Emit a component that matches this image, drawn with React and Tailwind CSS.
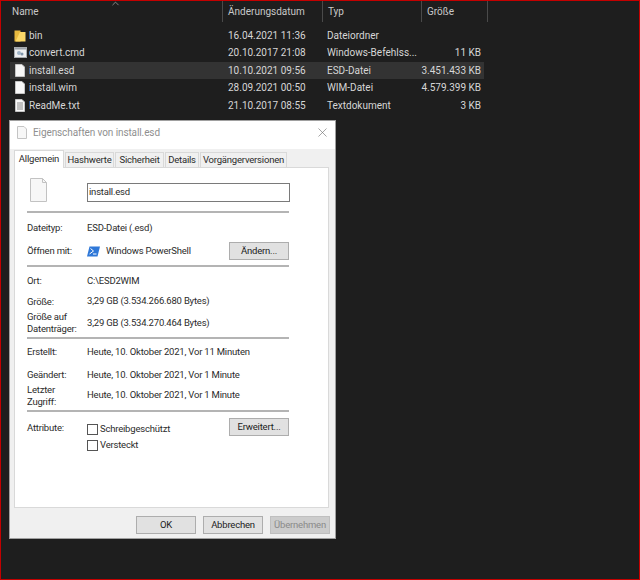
import React from 'react';
import { ChevronUp, X } from 'lucide-react';

const files = [
  { name: 'bin', date: '16.04.2021 11:36', type: 'Dateiordner', size: '', icon: 'folder' },
  { name: 'convert.cmd', date: '20.10.2017 21:08', type: 'Windows-Befehlss...', size: '11 KB', icon: 'cmd' },
  { name: 'install.esd', date: '10.10.2021 09:56', type: 'ESD-Datei', size: '3.451.433 KB', icon: 'file', selected: true },
  { name: 'install.wim', date: '28.09.2021 00:50', type: 'WIM-Datei', size: '4.579.399 KB', icon: 'file' },
  { name: 'ReadMe.txt', date: '21.10.2017 08:55', type: 'Textdokument', size: '3 KB', icon: 'txt' },
];

function FileIcon({ type }) {
  if (type === 'folder') {
    return (
      <svg width="12" height="13" viewBox="0 0 12 13">
        <path d="M0.5 1.5h6v11h-6z" fill="#e8b93f" />
        <path d="M6 3h5.500v9.500H1.500z" fill="#fbd868" />
      </svg>
    );
  }
  if (type === 'cmd') {
    return (
      <svg width="13" height="11" viewBox="0 0 13 11">
        <rect x="0.5" y="0.5" width="12" height="10" fill="#eef0f2" stroke="#a8acb0" />
        <rect x="1" y="1" width="11" height="1.5" fill="#9aa0a8" />
        <circle cx="5" cy="6" r="2" fill="#9fb4c8" />
        <circle cx="8" cy="7" r="1.5" fill="#7f95aa" />
      </svg>
    );
  }
  return (
    <svg width="10" height="13" viewBox="0 0 10 13">
      <path d="M0.5 0.5h6.500l2.500 2.500v9.500h-9z" fill="#f7f7f7" stroke="#c4c4c4" />
      {type === 'txt' && <path d="M2 4h6M2 6h6M2 8h6M2 10h6" stroke="#8a8a8a" />}
    </svg>
  );
}

function Separator() {
  return <div className="h-[2px] w-[262px] bg-[#b4b4b4]" />;
}

function WinButton({ children, disabled }) {
  return (
    <div
      className={`flex h-[18px] w-[60px] items-center justify-center border ${
        disabled ? 'border-[#bfbfbf] bg-[#cccccc] text-[#8a8a8a]' : 'border-[#adadad] bg-[#e1e1e1] text-[#222222]'
      }`}
    >
      {children}
    </div>
  );
}

function PropRow({ label, value, className = 'h-[18px]' }) {
  return (
    <div className={`flex items-center ${className}`}>
      <div className="w-[60px] leading-[12px]">{label}</div>
      <div>{value}</div>
    </div>
  );
}

function Checkbox({ label }) {
  return (
    <div className="mt-[4px] flex items-center gap-[2px]">
      <div className="h-[11px] w-[11px] border border-[#555555] bg-white" />
      <span>{label}</span>
    </div>
  );
}

const tabs = [
  { label: 'Hashwerte', width: 'w-[49px]' },
  { label: 'Sicherheit', width: 'w-[49px]' },
  { label: 'Details', width: 'w-[34px]' },
  { label: 'Vorgängerversionen', width: 'w-[87px]' },
];

export default function App() {
  return (
    <div className="h-[580px] w-[640px] overflow-hidden border border-[#c40000] bg-[#1e1e1e] font-['Roboto',sans-serif] text-[10px]">
      {/* explorer header */}
      <div className="relative flex h-[21px] items-center text-[#c8c8c8]">
        <ChevronUp size={11} strokeWidth={1.5} className="absolute left-[109px] top-[-3px] text-[#b0b0b0]" />
        <div className="h-full w-[221px] pl-[11px] pt-[3px]">Name</div>
        <div className="h-full w-[100px] border-l border-[#4a4a4a] pl-[5px] pt-[3px]">Änderungsdatum</div>
        <div className="h-full w-[99px] border-l border-[#4a4a4a] pl-[5px] pt-[3px]">Typ</div>
        <div className="h-full w-[67px] border-x border-[#4a4a4a] pl-[5px] pt-[3px]">Größe</div>
      </div>

      {/* file rows */}
      <div className="ml-[9px] mt-[4.5px] w-[474px] text-[#d6d6d6]">
        {files.map((f) => (
          <div key={f.name} className={`flex h-[17.5px] items-center ${f.selected ? 'bg-[#333333]' : ''}`}>
            <div className="flex w-[19px] justify-center pl-[1px]">
              <FileIcon type={f.icon} />
            </div>
            <div className="w-[199px]">{f.name}</div>
            <div className="w-[99px]">{f.date}</div>
            <div className="w-[90px]">{f.type}</div>
            <div className="w-[64px] text-right">{f.size}</div>
          </div>
        ))}
      </div>

      {/* properties dialog */}
      <div className="ml-[8px] mt-[6px] flex h-[419px] w-[327px] flex-col border border-[#a0a0a0] bg-[#f0f0f0] text-[9.5px] tracking-[-0.2px] text-[#2b2b2b]">
        <div className="flex h-[28px] items-center bg-white pb-[5px] pl-[7px] pr-[5px] text-[#8f8f8f]">
          <FileIcon type="file" />
          <span className="ml-[6px] flex-1 text-[10px] tracking-[-0.1px]">Eigenschaften von install.esd</span>
          <X size={15} strokeWidth={1} className="text-[#6f6f6f]" />
        </div>

        <div className="ml-[4px] mr-[6px] flex h-[18px] items-end">
          <div className="z-10 -mb-px flex h-[18px] w-[50px] items-center justify-center border border-b-0 border-[#d9d9d9] bg-white">
            Allgemein
          </div>
          {tabs.map((t) => (
            <div
              key={t.label}
              className={`ml-[1px] flex h-[15px] items-center justify-center border border-b-0 border-[#d9d9d9] bg-[#f0f0f0] ${t.width}`}
            >
              {t.label}
            </div>
          ))}
        </div>

        <div className="ml-[4px] mr-[6px] h-[341px] border border-[#d9d9d9] bg-white pl-[12px]">
          <div className="mt-[10px] flex h-[24px] items-end">
            <div className="ml-[3px] w-[57px]">
              <svg width="17" height="24" viewBox="0 0 17 24">
                <path d="M0.5 0.5h12l4 4v19h-16z" fill="#f7f7f7" stroke="#c2c2c2" />
                <path d="M12.500 0.5v4h4" fill="none" stroke="#c2c2c2" />
              </svg>
            </div>
            <div className="flex h-[19px] w-[203px] items-center border border-[#7a7a7a] pl-[1px]">install.esd</div>
          </div>
          <div className="mt-[9px]"><Separator /></div>
          <PropRow label="Dateityp:" value="ESD-Datei (.esd)" className="mt-[5px] h-[18px] pt-[2px]" />
          <div className="mt-[6px] flex h-[18px] items-center">
            <div className="w-[60px]">Öffnen mit:</div>
            <svg width="13" height="11" viewBox="0 0 13 11" className="mr-[6px]">
              <path d="M2.500 0.5h10.500l-2.500 10h-10.500z" fill="#2f78d8" />
              <path d="M3.500 2.500l3 2.500-4 3M6 8h3.500" fill="none" stroke="#ffffff" strokeWidth="1" />
            </svg>
            <div className="w-[123px]">Windows PowerShell</div>
            <WinButton>Ändern...</WinButton>
          </div>
          <div className="mt-[5px]"><Separator /></div>
          <PropRow label="Ort:" value="C:\ESD2WIM" className="mt-[4px] h-[18px] pt-[2px]" />
          <PropRow label="Größe:" value="3,29 GB (3.534.266.680 Bytes)" className="mt-[3px] h-[18px] pt-[1px]" />
          <PropRow label={<>Größe auf<br />Datenträger:</>} value="3,29 GB (3.534.270.464 Bytes)" className="h-[24px] pt-[2px]" />
          <div className="mt-[3px]"><Separator /></div>
          <PropRow label="Erstellt:" value="Heute, 10. Oktober 2021, Vor 11 Minuten" className="mt-[3px] h-[18px] pt-[2px]" />
          <PropRow label="Geändert:" value="Heute, 10. Oktober 2021, Vor 1 Minute" className="mt-[5px] h-[18px] pt-[2px]" />
          <PropRow label={<>Letzter<br />Zugriff:</>} value="Heute, 10. Oktober 2021, Vor 1 Minute" className="h-[24px] pt-[1px]" />
          <div className="mt-[3px]"><Separator /></div>
          <div className="mt-[6px] flex h-[18px] items-center">
            <div className="w-[60px] pt-[2px]">Attribute:</div>
            <div className="w-[142px]"><Checkbox label="Schreibgeschützt" /></div>
            <WinButton>Erweitert...</WinButton>
          </div>
          <div className="-mt-[2px] flex h-[18px] items-center pl-[60px]">
            <Checkbox label="Versteckt" />
          </div>
        </div>

        <div className="flex justify-end gap-[7px] pr-[5px] pt-[8px]">
          <WinButton>OK</WinButton>
          <WinButton>Abbrechen</WinButton>
          <WinButton disabled>Übernehmen</WinButton>
        </div>
      </div>
    </div>
  );
}
